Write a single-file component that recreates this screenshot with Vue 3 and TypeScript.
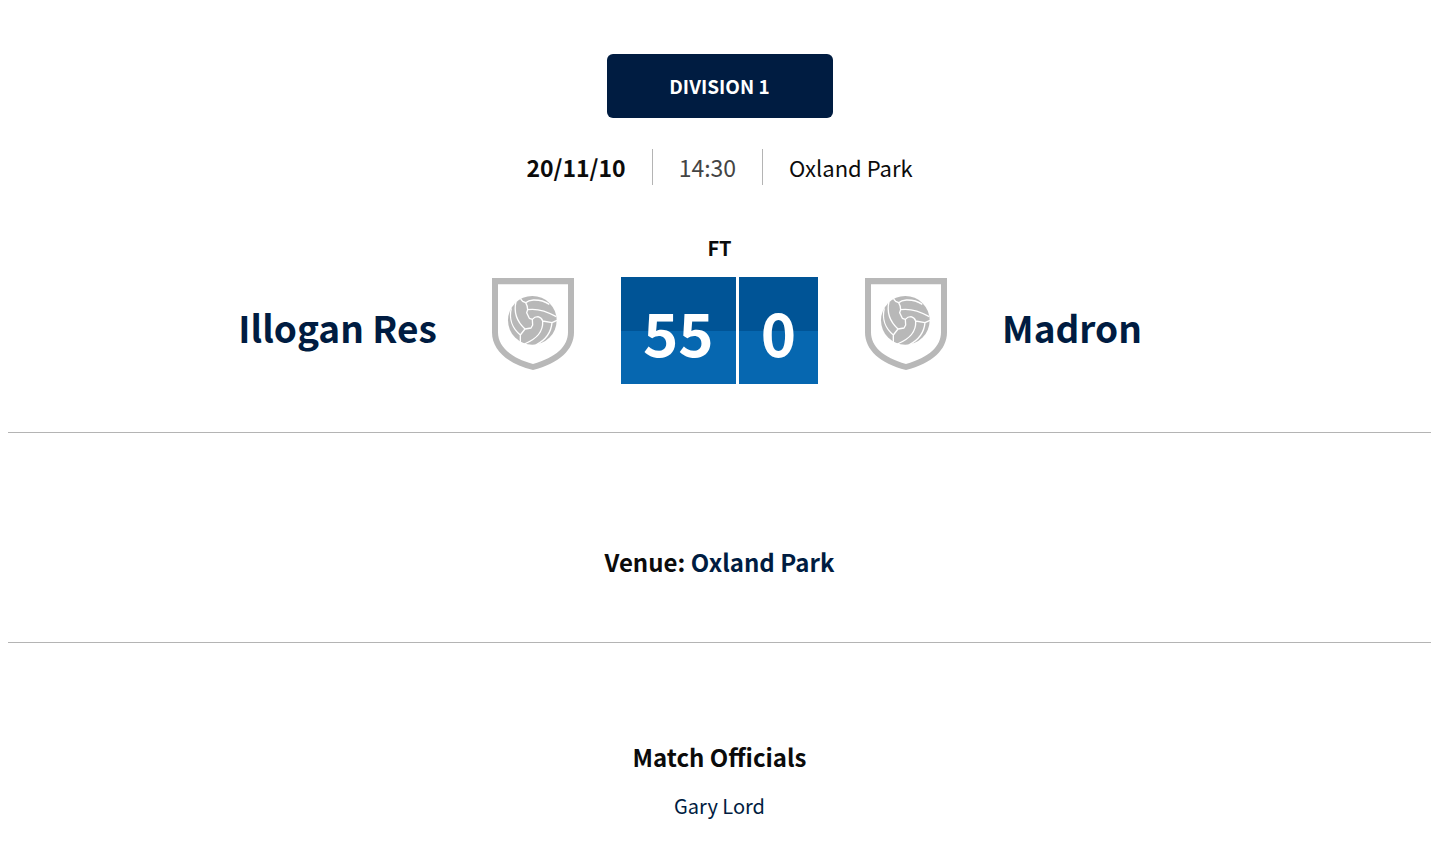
<script setup lang="ts">
interface Team {
  name: string
  score: number
}

const division: string = 'Division 1'
const date: string = '20/11/10'
const kickOff: string = '14:30'
const venue: string = 'Oxland Park'
const status: string = 'FT'
const home: Team = { name: 'Illogan Res', score: 55 }
const away: Team = { name: 'Madron', score: 0 }
const officials: string[] = ['Gary Lord']
</script>

<template>
  <main class="match">
    <header class="summary">
      <a class="division" href="#division">{{ division }}</a>
      <div class="meta">
        <strong class="date">{{ date }}</strong>
        <span class="time">{{ kickOff }}</span>
        <span class="ground">{{ venue }}</span>
      </div>
      <p class="status">{{ status }}</p>
      <div class="teams">
        <div class="team home">
          <a class="name" href="#home">{{ home.name }}</a>
          <svg class="crest" viewBox="36 37 246 276" aria-hidden="true">
            <path class="solid" fill-rule="evenodd" d="M36 37H282V200C282 252 238 294 159 313C80 294 36 252 36 200ZM54 56V200C54 242 90 276 159 295C228 276 264 242 264 200V56Z" />
            <circle class="solid" cx="157" cy="164" r="73" />
            <path class="seam" d="M122 100L128 107L137 111Q143 121 143 132L140 141L148 158L157 161L158 178L153 187L135 190L121 208V229M157 161Q164 153 174 153Q185 156 188 166L216 171L231 164M137 111Q145 104 160 103Q187 102 208 116M143 132Q181 126 229 153M108 108C101 138 111 168 135 190M94 128C86 160 98 189 121 208M188 166C190 199 171 219 133 235M216 171C213 204 196 224 167 238" />
          </svg>
        </div>
        <div class="scores">
          <span class="score">{{ home.score }}</span>
          <span class="score">{{ away.score }}</span>
        </div>
        <div class="team away">
          <svg class="crest" viewBox="36 37 246 276" aria-hidden="true">
            <path class="solid" fill-rule="evenodd" d="M36 37H282V200C282 252 238 294 159 313C80 294 36 252 36 200ZM54 56V200C54 242 90 276 159 295C228 276 264 242 264 200V56Z" />
            <circle class="solid" cx="157" cy="164" r="73" />
            <path class="seam" d="M122 100L128 107L137 111Q143 121 143 132L140 141L148 158L157 161L158 178L153 187L135 190L121 208V229M157 161Q164 153 174 153Q185 156 188 166L216 171L231 164M137 111Q145 104 160 103Q187 102 208 116M143 132Q181 126 229 153M108 108C101 138 111 168 135 190M94 128C86 160 98 189 121 208M188 166C190 199 171 219 133 235M216 171C213 204 196 224 167 238" />
          </svg>
          <a class="name" href="#away">{{ away.name }}</a>
        </div>
      </div>
    </header>
    <section class="venue">
      <h2>Venue: <a href="#venue">{{ venue }}</a></h2>
    </section>
    <section class="officials">
      <h2>Match Officials</h2>
      <p v-for="official in officials" :key="official">{{ official }}</p>
    </section>
  </main>
</template>

<style>
body {
  margin: 0;
  background: #fff;
}
</style>

<style scoped>
.match {
  padding: 54px 25px 0 8px;
  font-family: "Noto Sans CJK SC", "Noto Sans", sans-serif;
  color: #0b0b0b;
}

a {
  color: #001c41;
  text-decoration: none;
}

h2,
p {
  margin: 0;
}

.summary {
  display: flex;
  flex-direction: column;
  align-items: center;
  padding-bottom: 48px;
  border-bottom: 1px solid #b4b4b4;
}

.division {
  box-sizing: border-box;
  min-width: 226px;
  padding: 0 24px;
  border-radius: 6px;
  background: #001c41;
  color: #fff;
  font-size: 19px;
  font-weight: 700;
  line-height: 64px;
  text-align: center;
  text-transform: uppercase;
}

.meta {
  display: flex;
  margin-top: 31px;
  font-size: 23px;
  line-height: 36px;
}

.meta > * + * {
  margin-left: 26px;
  padding-left: 26px;
  border-left: 1px solid #b4b4b4;
}

.date {
  font-weight: 700;
}

.time {
  color: #444;
}

.meta .ground {
  font-size: 22px;
}

.status {
  margin-top: 47px;
  font-size: 20px;
  font-weight: 700;
  line-height: 32px;
}

.teams {
  display: grid;
  grid-template-columns: 1fr auto 1fr;
  column-gap: 47px;
  width: 100%;
  margin-top: 13px;
}

.team {
  display: flex;
  gap: 55px;
}

.home {
  justify-content: flex-end;
}

.name {
  font-size: 37px;
  font-weight: 700;
  line-height: 100px;
}

.crest {
  width: 82px;
  height: 92px;
  margin-top: 1px;
}

.solid {
  fill: #b8b8b8;
}

.seam {
  fill: none;
  stroke: #fff;
  stroke-width: 4;
  stroke-linejoin: round;
}

.scores {
  display: flex;
  gap: 3px;
}

.score {
  padding: 0 22px;
  background: linear-gradient(#005496 50%, #0667b0 50%);
  color: #fff;
  font-size: 60px;
  font-weight: 700;
  line-height: 107px;
}

h2 {
  font-size: 24px;
  font-weight: 700;
  line-height: 40px;
}

.venue {
  padding: 109px 0 60px;
  border-bottom: 1px solid #b4b4b4;
  text-align: center;
}

.officials {
  padding-top: 94px;
  text-align: center;
}

.officials p {
  margin-top: 14px;
  color: #001c41;
  font-size: 20px;
  line-height: 30px;
}
</style>
